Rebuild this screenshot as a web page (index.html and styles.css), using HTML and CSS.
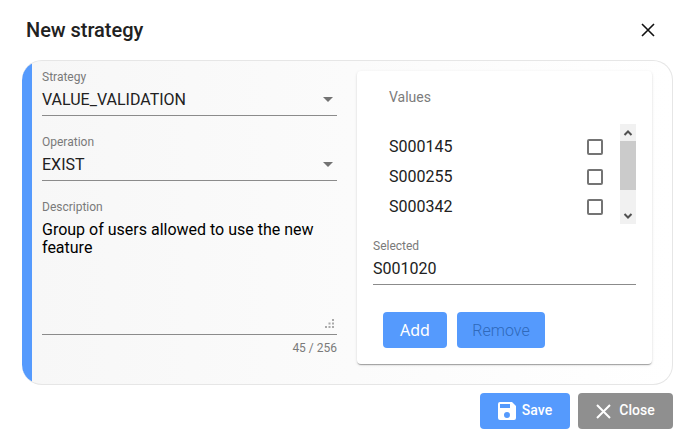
FILE: index.html
```html
<!DOCTYPE html>
<html lang="en">
<head>
<meta charset="utf-8">
<title>New strategy</title>
<link rel="stylesheet" href="styles.css">
</head>
<body>
<main class="dialog">
  <header class="header">
    <h1 class="title">New strategy</h1>
    <svg class="close-icon" width="14" height="14" viewBox="0 0 14 14"><path d="M1 1 13 13M13 1 1 13" fill="none" stroke="#111" stroke-width="1.6"/></svg>
  </header>
  <section class="panel">
    <div class="fields">
      <div class="field">
        <label class="label">Strategy</label>
        <div class="control"><span>VALUE_VALIDATION</span><i class="arrow"></i></div>
      </div>
      <div class="field">
        <label class="label">Operation</label>
        <div class="control"><span>EXIST</span><i class="arrow"></i></div>
      </div>
      <div class="field">
        <label class="label">Description</label>
        <div class="textarea">Group of users allowed to use the new feature
          <svg class="grip" width="9" height="9" viewBox="0 0 9 9" fill="#aaa"><path d="M7 0h2v2H7zM3.5 3.5h2v2h-2zM7 3.5h2v2H7zM0 7h2v2H0zM3.5 7h2v2h-2zM7 7h2v2H7z"/></svg>
        </div>
      </div>
      <div class="counter">45 / 256</div>
    </div>
    <div class="card">
      <div class="values-label">Values</div>
      <div class="list">
        <ul class="items">
          <li class="item"><span class="caption">S000145</span><i class="checkbox"></i></li>
          <li class="item"><span class="caption">S000255</span><i class="checkbox"></i></li>
          <li class="item"><span class="caption">S000342</span><i class="checkbox"></i></li>
        </ul>
        <div class="scrollbar">
          <svg class="scroll-arrow" width="16" height="17" viewBox="0 0 16 17"><path d="M4.500 11 8 7.500 11.500 11" fill="none" stroke="#505050" stroke-width="2"/></svg>
          <div class="thumb"></div>
          <svg class="scroll-arrow" width="16" height="17" viewBox="0 0 16 17"><path d="M4.500 7 8 10.500 11.500 7" fill="none" stroke="#505050" stroke-width="2"/></svg>
        </div>
      </div>
      <div class="selected">
        <label class="label">Selected</label>
        <div class="control">S001020</div>
      </div>
      <div class="card-actions">
        <button class="button add">Add</button>
        <button class="button remove" disabled>Remove</button>
      </div>
    </div>
  </section>
  <footer class="footer">
    <button class="button save"><svg width="18" height="18" viewBox="3 3 18 18"><path fill="#fff" d="M17 3H5a2 2 0 0 0-2 2v14a2 2 0 0 0 2 2h14a2 2 0 0 0 2-2V7zm-5 16a3 3 0 1 1 0-6 3 3 0 0 1 0 6zm3-10H5V5h10z"/></svg><span class="caption">Save</span></button>
    <button class="button close"><svg width="15" height="15" viewBox="0 0 15 15"><path d="M1 1 14 14M14 1 1 14" fill="none" stroke="#fff" stroke-width="2"/></svg><span class="caption">Close</span></button>
  </footer>
</main>
</body>
</html>
```

FILE: styles.css
```css
* { box-sizing: border-box; }
body { margin: 0; background: #fff; font-family: Roboto, sans-serif; color: #212121; }
.dialog { width: 682px; height: 436px; padding: 0 9px 0 22px; overflow: hidden; }
.header { display: flex; height: 60px; align-items: center; justify-content: space-between; padding: 0 18.5px 0 4px; }
.title { margin: 0; font-size: 20px; line-height: 32px; font-weight: 500; letter-spacing: -0.04px; }
.close-icon { display: block; }
.panel { display: flex; width: 651px; height: 325px; padding: 9px 20px 0; gap: 20px; border: 1px solid #e6e6e6; border-left: 0; border-radius: 20px; background: linear-gradient(90deg, #559afd 10px, #f7f7f7 10px, #fff 100%); }
.fields { width: 295px; }
.field { height: 65px; }
.field:nth-child(3) { height: 193px; }
.label { display: block; font-size: 12px; line-height: 14px; color: #7a7a7a; }
.control { display: flex; align-items: center; justify-content: space-between; height: 32px; border-bottom: 1px solid #8b8b8b; font-size: 16px; }
.arrow { margin-right: 4px; border: 5px solid transparent; border-top-color: #737373; border-bottom: 0; }
.textarea { position: relative; height: 121px; padding-top: 7px; border-bottom: 1px solid #8b8b8b; font-size: 16px; line-height: 18px; color: #000; }
.grip { position: absolute; right: 3px; bottom: 6px; }
.counter { margin-top: -52px; text-align: right; font-size: 12px; line-height: 14px; color: #7a7a7a; }
.card { width: 295px; height: 293px; margin-top: 1px; padding: 18px 16px 0; border-radius: 4px; background: #fff; box-shadow: 0 2px 1px -1px rgba(0,0,0,.2), 0 1px 1px rgba(0,0,0,.14), 0 1px 3px rgba(0,0,0,.12); }
.values-label { height: 35px; padding-left: 16px; font-size: 14px; line-height: 16px; color: #7c7c7c; }
.list { display: flex; height: 100px; justify-content: space-between; overflow: hidden; }
.items { width: 230px; margin: 0; padding: 8px 0 0 16px; list-style: none; }
.item { display: flex; align-items: center; justify-content: space-between; height: 30px; font-size: 16px; }
.checkbox { width: 16px; height: 16px; border: 2px solid #747474; border-radius: 2px; }
.scrollbar { width: 16px; height: 100px; background: #f1f1f1; }
.scroll-arrow { display: block; }
.thumb { height: 49px; margin-bottom: 17px; background: #cbcbcb; }
.selected { padding-top: 15px; }
.card-actions { display: flex; gap: 10px; padding: 27px 10px; }
.button { display: flex; align-items: center; justify-content: center; height: 36px; padding: 0; border: 0; border-radius: 4px; background: #559afd; color: #fff; font: 500 14px Roboto, sans-serif; }
.add { width: 64px; font: 400 16px "Noto Sans", sans-serif; }
.remove { width: 88px; font: 300 16px Roboto, sans-serif; color: #2f69ba; }
.footer { display: flex; justify-content: flex-end; gap: 8px; padding-top: 8px; }
.save { width: 90px; gap: 6px; }
.close { width: 95px; gap: 8px; background: #8f8f8f; }
.caption { padding-bottom: 2px; }
```
